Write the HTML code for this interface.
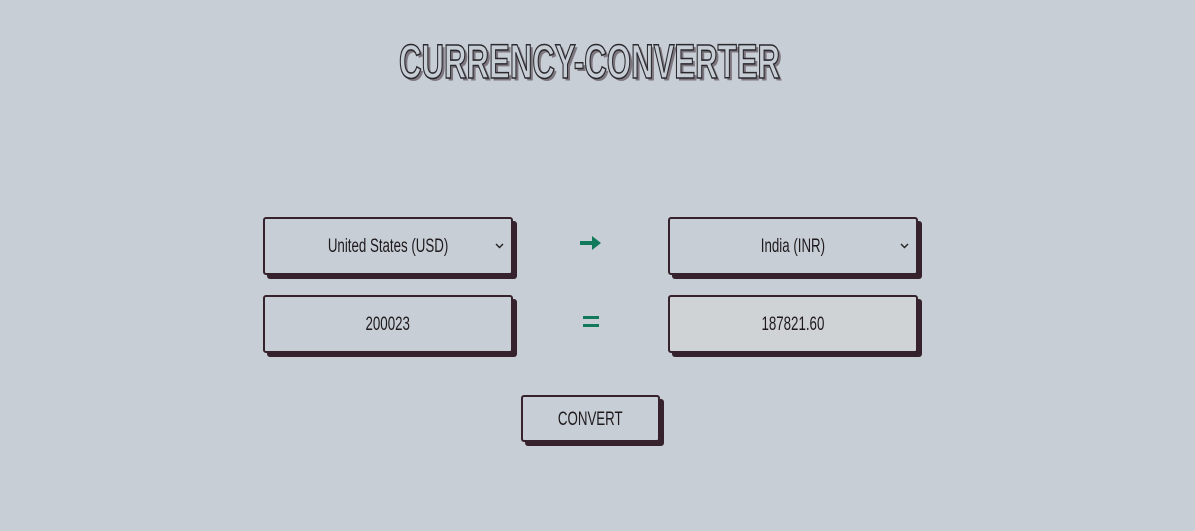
<!DOCTYPE html>
<html><head><style>
html,body{margin:0;padding:0;width:1195px;height:531px;background:#c8ced5;overflow:hidden;font-family:"Liberation Sans",sans-serif;}
.b{position:absolute;box-sizing:border-box;border:2px solid #36222d;border-radius:3px;box-shadow:4px 4px 0 #36222d;display:flex;align-items:center;justify-content:center;font-size:19px;color:#1e1a1e;background:#c8ced5;padding-top:2px;}
.b span.t{display:inline-block;transform:scaleX(0.7);white-space:nowrap;}
.chev{position:absolute;right:7px;top:24px;}
</style></head><body>
<svg style="position:absolute;left:0;top:0" width="1195" height="100">
<text x="400" y="79" textLength="381" lengthAdjust="spacingAndGlyphs" font-family="Liberation Sans, sans-serif" font-weight="bold" font-size="48" fill="#36222d" opacity="0.5" transform="translate(1.5,1.5)">CURRENCY-CONVERTER</text>
<text x="399" y="78" textLength="381" lengthAdjust="spacingAndGlyphs" font-family="Liberation Sans, sans-serif" font-weight="bold" font-size="48" fill="#c8ced5" stroke="#2a2a2e" stroke-width="1.6">CURRENCY-CONVERTER</text>
</svg>
<div class="b" style="left:263px;top:217px;width:250px;height:58px;"><span class="t">United States (USD)</span><svg class="chev" width="9" height="6"><path d="M1 1 L4.5 4.5 L8 1" fill="none" stroke="#222" stroke-width="1.4"/></svg></div>
<svg style="position:absolute;left:580px;top:236px" width="22" height="14"><path d="M0 5 H12 V0 L21 7 L12 14 V9 H0 Z" fill="#107a5a"/></svg>
<div class="b" style="left:668px;top:217px;width:250px;height:58px;"><span class="t">India (INR)</span><svg class="chev" width="9" height="6"><path d="M1 1 L4.5 4.5 L8 1" fill="none" stroke="#222" stroke-width="1.4"/></svg></div>
<div class="b" style="left:263px;top:295px;width:250px;height:58px;"><span class="t">200023</span></div>
<svg style="position:absolute;left:583px;top:316px" width="16" height="12"><rect x="0" y="0" width="16" height="3" fill="#107a5a"/><rect x="0" y="8" width="16" height="3" fill="#107a5a"/></svg>
<div class="b" style="left:668px;top:295px;width:250px;height:58px;background:#d0d3d6;"><span class="t">187821.60</span></div>
<div class="b" style="left:521px;top:395px;width:139px;height:47px;"><span class="t">CONVERT</span></div>
</body></html>
